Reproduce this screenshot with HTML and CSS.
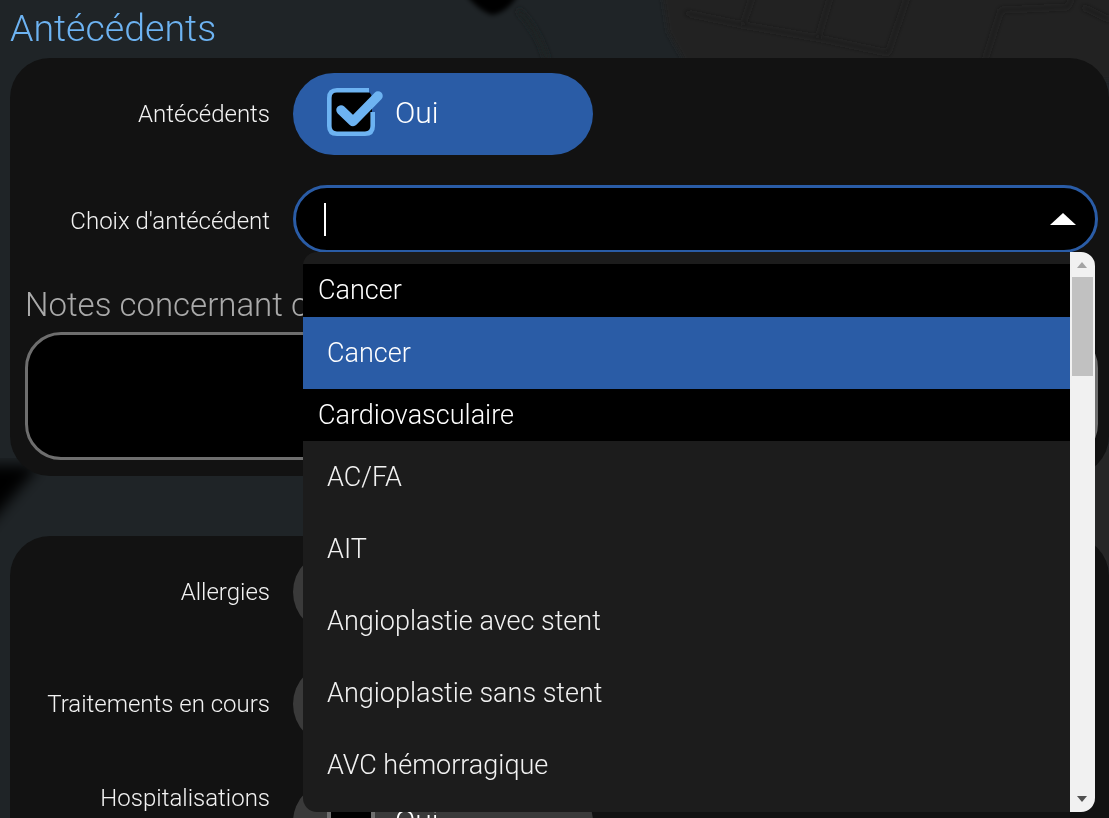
FILE: index.html
```html
<!DOCTYPE html>
<html lang="fr">
  <head>
    <meta charset="UTF-8" />
    <meta name="viewport" content="width=device-width, initial-scale=1.0" />
    <title>Antécédents</title>
    <link rel="stylesheet" href="styles.css">
  </head>
  <body>
    <!-- blurred photo behind the cards -->
    <svg class="backdrop" width="1109" height="818" viewBox="0 0 1109 818" aria-hidden="true">
      <defs>
        <filter id="soft"><feGaussianBlur stdDeviation="2.5" /></filter>
        <filter id="softer"><feGaussianBlur stdDeviation="7" /></filter>
      </defs>
      <rect width="1109" height="818" fill="#1f2427" />
      <path d="M660 -20L1130 -20L1130 80L695 80L668 32Z" fill="#232323" filter="url(#soft)" />
      <path d="M-20 465L40 465L-20 535Z" fill="#060606" filter="url(#softer)" />
      <g filter="url(#soft)">
        <path d="M518 10Q538 30 547 60" stroke="#1d2020" stroke-width="5" fill="none" />
        <path d="M466 -5Q478 10 492 15Q508 12 518 -5Z" fill="#040404" />
        <path d="M686 13L743 25L753 -5M743 25L818 38L831 -5M818 38L888 53L908 -5M985 60L1001 10L1068 7L1073 -5M1083 7L1110 20"
          stroke="#1e1e1e" stroke-width="2.5" fill="none" />
        <path d="M1092 462L1115 440L1115 575L1092 550Z" fill="#282525" />
      </g>
    </svg>

    <div class="page">
      <h2 class="page-title">Antécédents</h2>

      <section class="card">
        <div class="row">
          <label class="row-label">Antécédents</label>
          <div class="toggle toggle-on">
            <svg class="check-icon" width="60" height="48" viewBox="0 0 60 48">
              <rect x="3" y="3" width="42" height="42" rx="7" fill="#000" />
              <path d="M42 2.3L10 2.3Q2.3 2.3 2.3 10L2.3 38Q2.3 45.7 10 45.7L38 45.7Q45.7 45.7 45.7 38L45.7 24" fill="none" stroke="#6db3f2" stroke-width="4.6" />
              <path d="M14 22L26 33.5L51 8" fill="none" stroke="#6db3f2" stroke-width="9.5" stroke-linecap="round" stroke-linejoin="round" />
            </svg>
            <span class="toggle-text">Oui</span>
          </div>
        </div>

        <div class="row">
          <label class="row-label row-label-low">Choix d'antécédent</label>
          <div class="select">
            <span class="caret"></span>
            <span class="select-arrow"></span>
          </div>
        </div>

        <div class="notes">
          <label class="notes-label">Notes concernant ces antécédents</label>
          <div class="notes-box"></div>
        </div>
      </section>

      <section class="card card-second">
        <div class="row">
          <label class="row-label">Allergies</label>
          <div class="toggle">
            <span class="empty-box"></span>
            <span class="toggle-text">Oui</span>
          </div>
        </div>
        <div class="row">
          <label class="row-label">Traitements en cours</label>
          <div class="toggle">
            <span class="empty-box"></span>
            <span class="toggle-text">Oui</span>
          </div>
        </div>
        <div class="row row-top">
          <label class="row-label">Hospitalisations</label>
          <div class="toggle">
            <span class="empty-box"></span>
            <span class="toggle-text">Oui</span>
          </div>
        </div>
      </section>
    </div>

    <div class="dropdown">
      <ul class="dropdown-list">
        <li class="group">Cancer</li>
        <li class="option selected">Cancer</li>
        <li class="group">Cardiovasculaire</li>
        <li class="option">AC/FA</li>
        <li class="option">AIT</li>
        <li class="option">Angioplastie avec stent</li>
        <li class="option">Angioplastie sans stent</li>
        <li class="option">AVC hémorragique</li>
        <li class="option">AVC ischémique</li>
      </ul>
      <div class="scrollbar">
        <span class="scroll-up"></span>
        <span class="scroll-thumb"></span>
        <span class="scroll-down"></span>
      </div>
    </div>
  </body>
</html>
```

FILE: styles.css
```css
/* Basic Reset */
* {
  margin: 0;
  padding: 0;
  box-sizing: border-box;
}

html {
  overflow: hidden;
}

body {
  height: 818px;
  overflow: hidden;
  background-color: #1f2427;
  font-family: "Roboto", "Liberation Sans", sans-serif;
  font-weight: 300;
  color: #fff;
}

.backdrop {
  position: fixed;
  top: 0;
  left: 0;
  z-index: -1;
}

.page {
  padding-left: 10px;
}

.page-title {
  height: 58px;
  padding-top: 7px;
  font-size: 37.5px;
  line-height: 42px;
  font-weight: 300;
  color: #6db3f2;
}

/* Cards */
.card {
  width: 1099px;
  padding: 15px 11px 16px 15px;
  background-color: #121212;
  border-radius: 40px;
}

.card-second {
  margin-top: 60px;
}

.row {
  display: flex;
  align-items: center;
  min-height: 68px;
  margin-bottom: 30px;
  margin-left: -15px;
}

.row-top {
  align-items: flex-start;
  margin-top: 36px;
}

.row-top .row-label {
  padding-top: 2px;
}

.row-label {
  width: 260px;
  margin-right: 23px;
  text-align: right;
  font-size: 24px;
  line-height: 30px;
  color: #f2f2f2;
}

.row-label-low {
  padding-top: 3px;
}

/* Yes/no pill */
.toggle {
  display: flex;
  align-items: center;
  width: 300px;
  height: 82px;
  padding-left: 34px;
  border-radius: 41px;
  background-color: #3a3a3a;
  font-size: 30px;
}

.toggle-on {
  background-color: #2a5ca6;
}

.toggle-text {
  padding-bottom: 3px;
}

.check-icon {
  margin-right: 8px;
  margin-bottom: 5px;
}

.empty-box {
  width: 48px;
  height: 47px;
  margin-right: 20px;
  margin-bottom: 5px;
  background-color: #000;
  border: 4px solid #6e6e6e;
  border-radius: 8px;
}

/* Select */
.select {
  display: flex;
  align-items: center;
  justify-content: space-between;
  width: 805px;
  height: 68px;
  padding: 0 19px 0 28px;
  background-color: #000;
  border: 3px solid #2a5ca6;
  border-radius: 34px;
}

.caret {
  width: 2px;
  height: 33px;
  background-color: #fff;
}

.select-arrow {
  width: 0;
  height: 0;
  border-left: 13px solid transparent;
  border-right: 13px solid transparent;
  border-bottom: 12px solid #fff;
}

/* Notes */
.notes-label {
  display: block;
  height: 49px;
  font-size: 33px;
  line-height: 44px;
  color: #aaa;
  white-space: nowrap;
}

.notes-box {
  height: 128px;
  background-color: #000;
  border: 3px solid #6e6e6e;
  border-radius: 36px;
}

/* Dropdown opened over the form */
.dropdown {
  position: absolute;
  top: 252px;
  left: 303px;
  display: flex;
  width: 792px;
  height: 560px;
  overflow: hidden;
  background-color: #1c1c1c;
  border-radius: 14px;
}

.dropdown-list {
  flex: 1;
  padding-top: 12px;
  list-style: none;
}

.group {
  height: 52px;
  padding: 8px 15px 0;
  background-color: #000;
  font-size: 27px;
  line-height: 36px;
}

.group:first-child {
  height: 53px;
}

.option {
  height: 72px;
  padding-left: 24px;
  font-size: 27px;
  line-height: 72px;
  color: #f2f2f2;
}

.option.selected {
  background-color: #2a5ca6;
  color: #fff;
}

/* Scrollbar */
.scrollbar {
  position: relative;
  width: 25px;
  background-color: #f1f1f1;
}

.scroll-thumb {
  position: absolute;
  top: 25px;
  left: 2px;
  width: 21px;
  height: 99px;
  background-color: #c1c1c1;
}

.scroll-up,
.scroll-down {
  position: absolute;
  left: 7px;
  width: 0;
  height: 0;
  border-left: 5.5px solid transparent;
  border-right: 5.5px solid transparent;
}

.scroll-up {
  top: 10px;
  border-bottom: 6px solid #a3a3a3;
}

.scroll-down {
  bottom: 10px;
  border-top: 6px solid #505050;
}
```
